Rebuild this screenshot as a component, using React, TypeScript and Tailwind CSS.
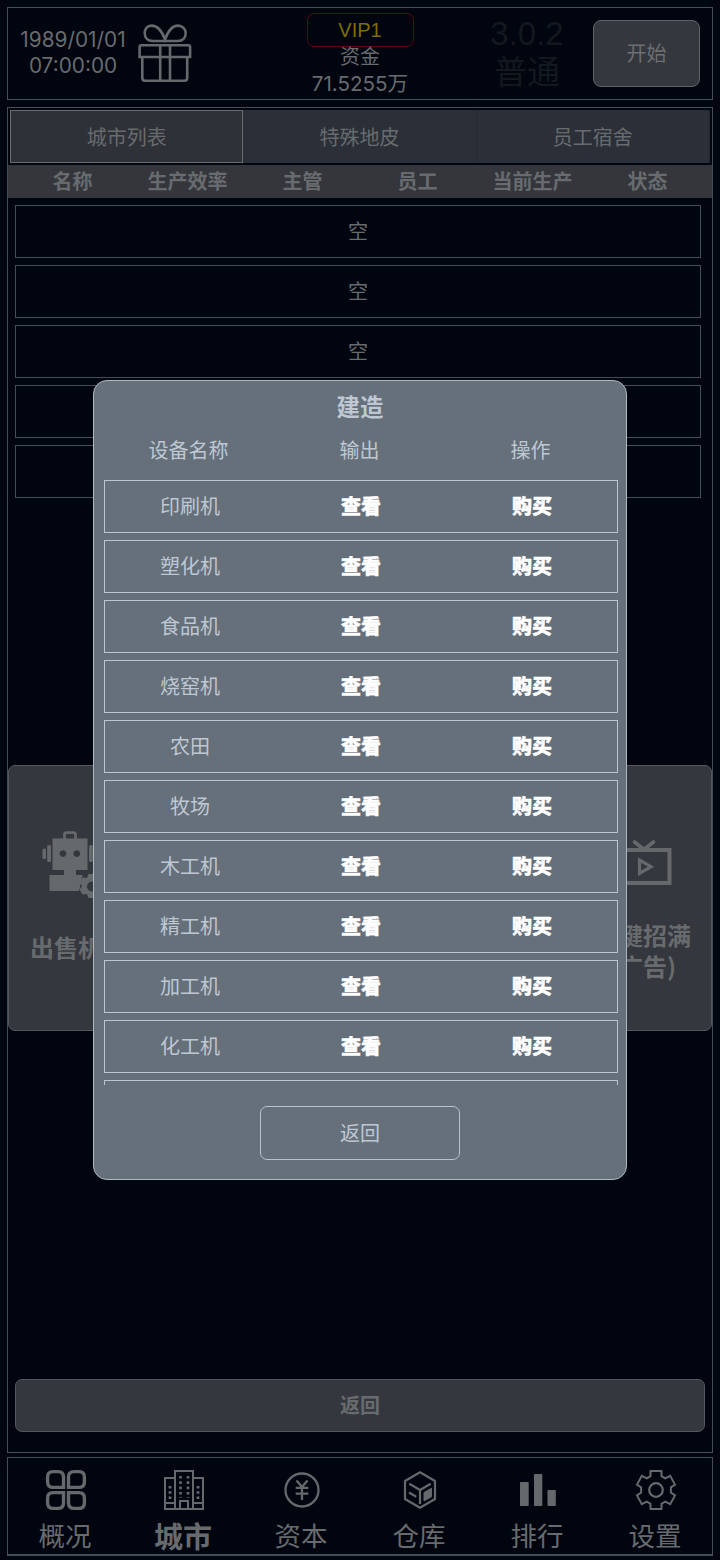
import React from "react";

const tabs = ["城市列表", "特殊地皮", "员工宿舍"];
const columns = ["名称", "生产效率", "主管", "员工", "当前生产", "状态"];
const machines = ["印刷机", "塑化机", "食品机", "烧窑机", "农田", "牧场", "木工机", "精工机", "加工机", "化工机"];

function GiftIcon() {
  return (
    <svg width="54" height="60" viewBox="0 0 54 60" fill="none" stroke="#66696b" strokeWidth="2.6">
      <path d="M27 16.500C24 8 19 2.600 13.500 2.600 9 2.600 6.700 6 6.700 10c0 5 3 8 8 8h25c5 0 8-3 8-8 0-4-3.200-7.400-7.700-7.400C34.500 2.600 30 8 27 16.500Z" />
      <path d="M1.600 34V24.300q0-2 2-2h46.500q2 0 2 2V34Z" />
      <path d="M4.300 34V55q0 2.700 2.700 2.700h39.500q2.700 0 2.700-2.700V34M22.200 22.300v35.400M32 22.300v35.400" />
    </svg>
  );
}

function RobotIcon() {
  return (
    <svg width="64" height="68" viewBox="0 0 64 68" fill="#66696b">
      <path d="M22.500 8V3.500q0-1.800 1.800-1.800h7.400q1.800 0 1.800 1.800V8" fill="none" stroke="#66696b" strokeWidth="2.700" />
      <path fillRule="evenodd" d="M10.500 7.500h35v31.500H34v5h6.500L37 60H7.500V44H22v-5H10.500ZM21 19.200a3.400 3.400 0 1 0 .01 0ZM34.800 19.200a3.400 3.400 0 1 0 .01 0Z" />
      <rect x="5.200" y="14" width="3.800" height="17" rx="1.500" />
      <rect x=".5" y="17.500" width="3.500" height="10.500" rx="1.500" />
      <rect x="47" y="14" width="3.800" height="17" rx="1.500" />
      <rect x="52" y="17.500" width="3.500" height="10.500" rx="1.500" />
      <path fillRule="evenodd" transform="translate(-1.500 0)" d="M48 43h7l1.500 4 4.500-.5 3 5-2.500 3.500 2.500 3.500-3 5-4.500-.5-1.500 4h-7l-1.500-4-4.500.5-3-5 2.500-3.500-2.500-3.500 3-5 4.500.5ZM51.500 50.500a5 5 0 1 0 .01 0Z" />
    </svg>
  );
}

function TvIcon() {
  return (
    <svg width="58" height="46" viewBox="0 0 58 46" fill="none" stroke="#66696b" strokeWidth="4">
      <rect x="2" y="11" width="53.500" height="33" />
      <path d="M20.500 3l9.500 7.500L39.500 3" strokeLinecap="round" strokeWidth="3.700" />
      <path d="M25.500 21v13.500l11.500-6.800Z" strokeWidth="3.200" />
    </svg>
  );
}

function OverviewIcon() {
  return (
    <svg width="42" height="42" viewBox="0 0 42 42" fill="none" stroke="#66696b" strokeWidth="3.400">
      <path d="M8 2.600h5q5.500 0 5.500 5.500V18.400H8q-5.400 0-5.400-5.400V8q0-5.400 5.400-5.400Z" />
      <path d="M29 2.600h5q5.400 0 5.400 5.400v5q0 5.400-5.400 5.400H23.500V8q0-5.400 5.500-5.400Z" />
      <path d="M8 23.600h10.500V34q0 5.400-5.500 5.400H8q-5.400 0-5.400-5.400v-5q0-5.400 5.400-5.400Z" />
      <path d="M23.500 23.600H34q5.400 0 5.400 5.400v5q0 5.400-5.400 5.400h-5q-5.500 0-5.500-5.400Z" />
    </svg>
  );
}

function CityIcon() {
  return (
    <svg width="42" height="42" viewBox="0 0 42 42" fill="none" stroke="#66696b" strokeWidth="2">
      <path d="M12 40V2h18v38M12 9H2v31h38V9H30M2 34h10M30 34h10M17 40v-8h8v8" />
      <path d="M17.500 7v22M25 7v22" strokeWidth="2.600" strokeDasharray="2.600 2.700" />
      <path d="M7 17v13M35 17v13" strokeWidth="2.800" strokeDasharray="2.600 2.600" />
    </svg>
  );
}

function CapitalIcon() {
  return (
    <svg width="42" height="42" viewBox="0 0 42 42" fill="none" stroke="#66696b" strokeWidth="2.300">
      <circle cx="21" cy="21" r="16.500" />
      <path d="M15.500 11.500l5.500 6.500 5.500-6.500M21 18v13M14.700 18.800h12.600M14.700 24.700h12.600" />
    </svg>
  );
}

function WarehouseIcon() {
  return (
    <svg width="42" height="42" viewBox="0 0 42 42" fill="none" stroke="#66696b" strokeWidth="2.200" strokeLinejoin="round">
      <path d="M21 3.300L36 12v18l-15 8.700L6 30V12Z" />
      <path d="M10.300 14.700L21 21l10.700-6.300M21 21v14M10 23.500l7.300 4.200" />
      <path d="M25 23.500l7.500-4.300v8.600L25 32Z" fill="#66696b" strokeWidth="1" />
    </svg>
  );
}

function RankIcon() {
  return (
    <svg width="42" height="42" viewBox="0 0 42 42" fill="#66696b">
      <rect x="3" y="13" width="8.700" height="24" rx=".7" />
      <rect x="17" y="5" width="8.300" height="32" rx=".7" />
      <rect x="30.500" y="21" width="8.300" height="16" rx=".7" />
    </svg>
  );
}

function SettingsIcon() {
  return (
    <svg width="42" height="42" viewBox="0 0 42 42" fill="none" stroke="#66696b" strokeWidth="2">
      <path d="M15.500 2h11v5.200l3.700 2.200 5-2.600 4.800 8.800-4.100 2.800v5.200l4.100 2.800-4.800 8.800-5-2.600-3.700 2.200V40h-11v-5.200l-3.700-2.200-5 2.600L2 26.400l4.100-2.800v-5.200L2 15.600l4.800-8.800 5 2.600 3.700-2.200Z" />
      <circle cx="21" cy="21" r="6.800" strokeWidth="2.200" />
    </svg>
  );
}

const navItems = [
  { label: "概况", icon: <OverviewIcon />, active: false },
  { label: "城市", icon: <CityIcon />, active: true },
  { label: "资本", icon: <CapitalIcon />, active: false },
  { label: "仓库", icon: <WarehouseIcon />, active: false },
  { label: "排行", icon: <RankIcon />, active: false },
  { label: "设置", icon: <SettingsIcon />, active: false },
];

function Header() {
  return (
    <header className="flex h-[93px] shrink-0 border border-[#464d56]">
      <div className="ml-[9px] mt-[18.500px] w-[112px] text-center font-['Inter','Noto_Sans_CJK_SC',sans-serif] text-[20.800px] leading-[26.500px]">
        <div>1989/01/01</div>
        <div>07:00:00</div>
      </div>
      <div className="ml-[9px] mt-[15px]">
        <GiftIcon />
      </div>
      <div className="ml-[104px] mt-[5px] flex w-[128px] flex-col items-center text-[20px] leading-[27px]">
        <div className="flex h-[34px] w-[107px] items-center justify-center rounded-[7px] border-[1.5px] border-[#5a0713] pt-px font-['Liberation_Sans',sans-serif] text-[20px] text-[#7c6d08]">
          VIP1
        </div>
        <div className="-mt-[5px]">资金</div>
        <div className="mt-px whitespace-nowrap font-['Inter','Noto_Sans_CJK_SC',sans-serif] text-[20.600px]">71.5255万</div>
      </div>
      <div className="ml-[46px] mt-[6px] w-[114px] text-center font-['Liberation_Sans','Noto_Sans_CJK_SC',sans-serif] text-[33px] leading-[39px] text-[#13181f]">
        <div>3.0.2</div>
        <div>普通</div>
      </div>
      <button className="ml-[9px] mt-[12px] h-[67px] w-[107px] rounded-[8px] border-[1.5px] border-[#5f6469] bg-[#34373d] pb-px text-[20px] text-[#6c6f72]">
        开始
      </button>
    </header>
  );
}

function BuildDialog() {
  return (
    <div className="absolute left-[93px] top-[380px] flex h-[800px] w-[534px] flex-col rounded-[14px] border-[1.5px] border-[#adb8c3] bg-[#65707b] text-[#bfc7d2]">
      <h2 className="mt-[9px] text-center text-[23.500px] font-bold leading-[32px]">建造</h2>
      <div className="ml-[9px] mt-[12px] grid w-[513px] grid-cols-3 text-center text-[20px] leading-[32px]">
        <div>设备名称</div>
        <div>输出</div>
        <div>操作</div>
      </div>
      <div className="ml-[10px] mt-[14px] flex h-[605px] w-[514px] flex-col gap-[7px] overflow-hidden">
        {machines.map((name) => (
          <div key={name} className="grid h-[53px] shrink-0 grid-cols-[171px_171px_171px] items-center justify-center border border-[#bac5d0] pb-px text-center text-[20px] leading-[30px]">
            <div>{name}</div>
            <div className="font-black text-white [-webkit-text-stroke:0.4px_white]">查看</div>
            <div className="font-black text-white [-webkit-text-stroke:0.4px_white]">购买</div>
          </div>
        ))}
        <div className="h-[53px] shrink-0 border border-[#bac5d0]" />
      </div>
      <button className="mt-[21px] h-[54px] w-[200px] self-center rounded-[7px] border-[1.5px] border-[#b7c3ce] pb-px text-[20px]">
        返回
      </button>
    </div>
  );
}

export default function App() {
  return (
    <div className="relative flex h-[1560px] w-[720px] flex-col overflow-hidden bg-[#00050f] px-[7px] pt-[7px] font-['Noto_Sans_CJK_SC',sans-serif] text-[#686b6e]">
      <Header />
      <main className="mt-[7px] flex h-[1346px] shrink-0 flex-col border border-[#464d56]">
        <div className="ml-[2px] mt-[2px] grid h-[53px] w-[700px] shrink-0 grid-cols-3 text-center text-[20px] leading-[51px]">
          {tabs.map((tab, i) => (
            <div
              key={tab}
              className={
                i === 0
                  ? "border border-[#686b6e] bg-[#2e3138]"
                  : "border-r border-[#252a31] bg-[#2b3038] pt-px"
              }
            >
              {tab}
            </div>
          ))}
        </div>
        <div className="mt-[2px] grid h-[33px] shrink-0 grid-cols-6 bg-[#34363c] px-[7px] text-center text-[20px] font-bold leading-[32px]">
          {columns.map((column) => (
            <div key={column}>{column}</div>
          ))}
        </div>
        <div className="ml-[7px] mt-[7px] flex w-[686px] flex-col gap-[7px]">
          {[0, 1, 2, 3, 4].map((slot) => (
            <div key={slot} className="flex h-[53px] items-center justify-center border border-[#464d56] pb-[2px] text-[20px]">
              空
            </div>
          ))}
        </div>
        <div className="mt-[267px] flex h-[266px] shrink-0 justify-between rounded-[7px] border border-[#54585d] bg-[#34373d] text-center text-[24px] font-bold leading-[31px]">
          <div className="flex w-[138px] flex-col items-center pt-[65px]">
            <div className="-ml-[8px]">
              <RobotIcon />
            </div>
            <div className="mt-[32px]">出售机器</div>
          </div>
          <div className="flex w-[136px] flex-col items-center pt-[73px]">
            <TvIcon />
            <div className="mt-[34px]">一键招满</div>
            <div>(广告)</div>
          </div>
        </div>
        <button className="ml-[7px] mt-[348px] h-[53px] w-[690px] shrink-0 rounded-[7px] border-[1.5px] border-[#54585d] bg-[#34373d] pb-[2px] text-[20px] font-bold">
          返回
        </button>
      </main>
      <nav className="mt-[4px] h-[99px] shrink-0 border border-b-2 border-[#464d56]">
        <div className="-ml-px grid w-[708px] grid-cols-6">
          {navItems.map((item) => (
            <div key={item.label} className="flex flex-col items-center pt-[11px]">
              {item.icon}
              <div
                className={
                  item.active
                    ? "-ml-[2px] mt-[4px] text-[29px] font-bold leading-[40px]"
                    : "-ml-[2px] mt-[4px] text-[26.500px] leading-[40px]"
                }
              >
                {item.label}
              </div>
            </div>
          ))}
        </div>
      </nav>
      <BuildDialog />
    </div>
  );
}
